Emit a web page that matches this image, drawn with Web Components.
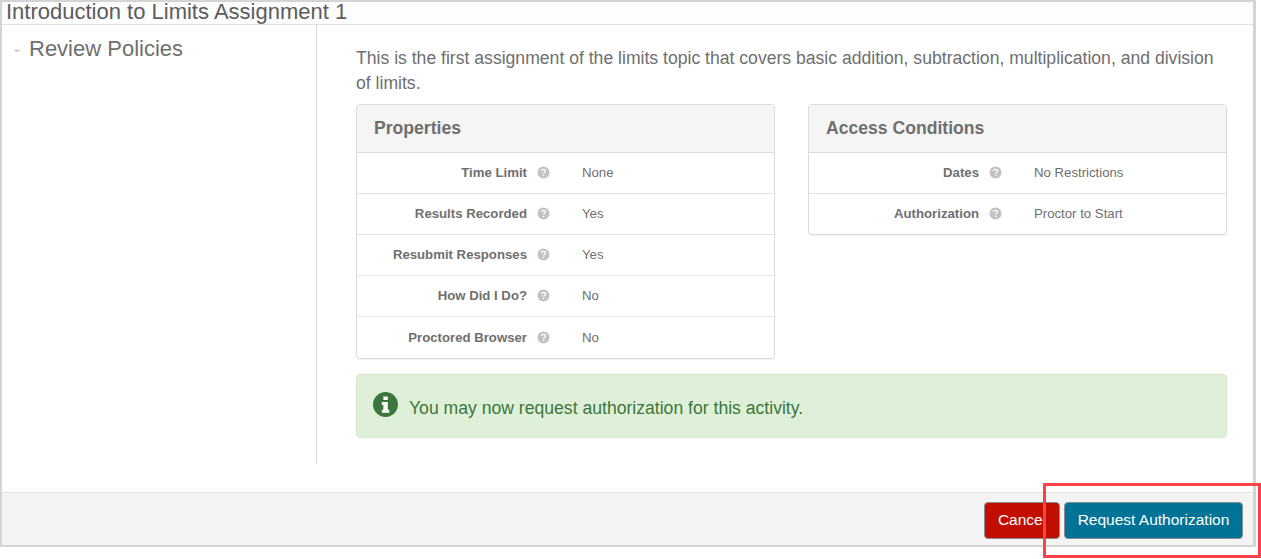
<!DOCTYPE html>
<html lang="en">
<head>
<meta charset="utf-8">
<title>Introduction to Limits Assignment 1</title>
<style>
  html, body { margin: 0; padding: 0; background: #fff; }
  body { font-family: "Liberation Sans", Arial, sans-serif; color: #6f6f6f; width: 1261px; height: 559px; overflow: hidden; position: relative; }
</style>
</head>
<body>
<template id="help-tpl">
  <style>
    :host { display: inline-flex; width: 13px; height: 13px; }
    svg { display: block; }
  </style>
  <svg width="13" height="13" viewBox="0 0 13 13" aria-hidden="true">
    <circle cx="6.5" cy="6.5" r="6" fill="#c2c2c2"/>
    <path d="M4.5 5.1c.1-1.1.9-1.7 2-1.7 1.2 0 2 .7 2 1.6 0 1.4-1.9 1.4-1.9 2.6" fill="none" stroke="#fff" stroke-width="1.3"/>
    <rect x="5.8" y="8.6" width="1.5" height="1.5" fill="#fff"/>
  </svg>
</template>

<template id="row-tpl">
  <style>
    :host { display: grid; grid-template-columns: var(--label-w, 170px) 55px 1fr; align-items: center; height: 38px; padding-bottom: 2px; border-top: 1px solid #e3e3e3; font-size: 13.2px; color: #6f6f6f; }
    :host(:first-of-type) { border-top: 0; }
    :host([tall]) { height: 40px; padding-bottom: 1px; }
    .label { font-weight: bold; text-align: right; }
    .help { padding-left: 10px; display: flex; }
  </style>
  <div class="label"><slot name="label"></slot></div>
  <div class="help"><help-icon></help-icon></div>
  <div class="value"><slot></slot></div>
</template>

<template id="panel-tpl">
  <style>
    :host { display: block; width: 419px; box-sizing: border-box; border: 1px solid #dcdcdc; border-radius: 4px; background: #fff; box-shadow: 0 1px 1px rgba(0,0,0,.05); align-self: start; }
    header { height: 48px; box-sizing: border-box; padding: 0 17px; display: flex; align-items: center; background: #f5f5f5; border-bottom: 1px solid #dcdcdc; border-radius: 3px 3px 0 0; font-size: 17.6px; font-weight: bold; color: #6f6f6f; }
  </style>
  <header id="title"></header>
  <slot></slot>
</template>

<template id="alert-tpl">
  <style>
    :host { display: flex; align-items: center; gap: 11px; height: 64px; box-sizing: border-box; padding: 4px 16px 0; background: #dff0d8; border: 1px solid #d6e9c6; border-radius: 4px; color: #3c763d; font-size: 17.6px; }
    svg { display: block; margin-top: -8px; }
  </style>
  <svg width="25" height="25" viewBox="0 0 26 26" aria-hidden="true">
    <circle cx="13" cy="13" r="13" fill="#3c763d"/>
    <path d="M10.8 4.6h4.6v3.8h-4.6zM9.2 10.4h6.2v8h1.6v3.2H9.2v-3.2h1.6v-4.8H9.2z" fill="#fff"/>
  </svg>
  <span><slot></slot></span>
</template>

<template id="btn-tpl">
  <style>
    :host { display: inline-flex; align-items: center; justify-content: center; height: 37px; box-sizing: border-box; padding-bottom: 2px; border: 1px solid #8c8c8c; border-radius: 4px; font-size: 15.5px; color: #fff; background: var(--btn-bg, #777); }
  </style>
  <slot></slot>
</template>

<template id="dialog-tpl">
  <style>
    :host { display: block; width: 1256px; height: 547px; box-sizing: border-box; border: 2px solid #d4d4d4; border-right-width: 3px; }
    .frame { display: flex; flex-direction: column; height: 100%; background: #fff; }
    .title { height: 23px; box-sizing: border-box; flex: none; background: #fdfdfd; border-bottom: 1px solid #e0e0e0; padding-left: 4px; font-size: 22px; line-height: 20px; color: #5c5c5c; white-space: nowrap; }
    .body { flex: 1; display: flex; min-height: 0; }
    .side { width: 315px; height: 438px; box-sizing: border-box; flex: none; border-right: 1px solid #d8d8d8; }
    .main { flex: 1; min-width: 0; }
    footer { flex: none; height: 53px; box-sizing: border-box; background: #f4f4f4; border-top: 1px solid #e3e3e3; display: flex; justify-content: flex-end; align-items: flex-start; gap: 4px; padding: 9px 10px 0 0; }
  </style>
  <div class="frame">
    <div class="title"><slot name="title"></slot></div>
    <div class="body">
      <div class="side"><slot name="side"></slot></div>
      <div class="main"><slot></slot></div>
    </div>
    <footer><slot name="actions"></slot></footer>
  </div>
</template>

<template id="nav-tpl">
  <style>
    :host { display: flex; align-items: baseline; padding: 10px 0 0 12px; font-size: 22px; line-height: 28px; color: #6f6f6f; }
    i { font-style: normal; width: 15px; color: #b5b5b5; font-size: 18px; flex: none; }
  </style>
  <i>-</i><slot></slot>
</template>

<template id="content-tpl">
  <style>
    :host { display: block; padding: 21px 0 0 39px; width: 871px; }
    p { margin: 0 0 8px; font-size: 17.6px; line-height: 25px; color: #6f6f6f; }
    .panels { display: grid; grid-template-columns: 419px 419px; column-gap: 33px; height: 255px; margin-bottom: 15px; }
  </style>
  <p><slot name="intro"></slot></p>
  <div class="panels"><slot name="panels"></slot></div>
  <slot></slot>
</template>

<template id="mark-tpl">
  <style>
    :host { display: block; position: absolute; left: 1043px; top: 483px; width: 218px; height: 75px; box-sizing: border-box; border: 3px solid #fa4248; pointer-events: none; }
  </style>
</template>

<script>
  // every element here just clones its template into an open shadow root
  function define(tag, tplId, extra) {
    customElements.define(tag, class extends HTMLElement {
      constructor() {
        super();
        this.attachShadow({ mode: 'open' });
        this.shadowRoot.append(document.getElementById(tplId).content.cloneNode(true));
      }
      connectedCallback() {
        if (extra) extra(this);
      }
    });
  }

  define('help-icon', 'help-tpl');
  define('prop-row', 'row-tpl');
  define('info-panel', 'panel-tpl', el => {
    el.shadowRoot.getElementById('title').textContent = el.getAttribute('heading');
  });
  define('info-alert', 'alert-tpl');
  define('action-button', 'btn-tpl');
  define('policy-dialog', 'dialog-tpl');
  define('side-nav', 'nav-tpl');
  define('policy-content', 'content-tpl');
  define('red-mark', 'mark-tpl');
</script>

<policy-dialog>
  <span slot="title">Introduction to Limits Assignment 1</span>
  <side-nav slot="side">Review Policies</side-nav>

  <policy-content>
    <span slot="intro">This is the first assignment of the limits topic that covers basic addition, subtraction, multiplication, and division of limits.</span>

    <info-panel slot="panels" heading="Properties">
      <prop-row><span slot="label">Time Limit</span>None</prop-row>
      <prop-row><span slot="label">Results Recorded</span>Yes</prop-row>
      <prop-row><span slot="label">Resubmit Responses</span>Yes</prop-row>
      <prop-row><span slot="label">How Did I Do?</span>No</prop-row>
      <prop-row tall><span slot="label">Proctored Browser</span>No</prop-row>
    </info-panel>

    <info-panel slot="panels" heading="Access Conditions">
      <prop-row><span slot="label">Dates</span>No Restrictions</prop-row>
      <prop-row><span slot="label">Authorization</span>Proctor to Start</prop-row>
    </info-panel>

    <info-alert>You may now request authorization for this activity.</info-alert>
  </policy-content>

  <action-button slot="actions" style="--btn-bg:#c20e00;width:76px">Cancel</action-button>
  <action-button slot="actions" style="--btn-bg:#007396;width:179px">Request Authorization</action-button>
</policy-dialog>

<red-mark></red-mark>
</body>
</html>
